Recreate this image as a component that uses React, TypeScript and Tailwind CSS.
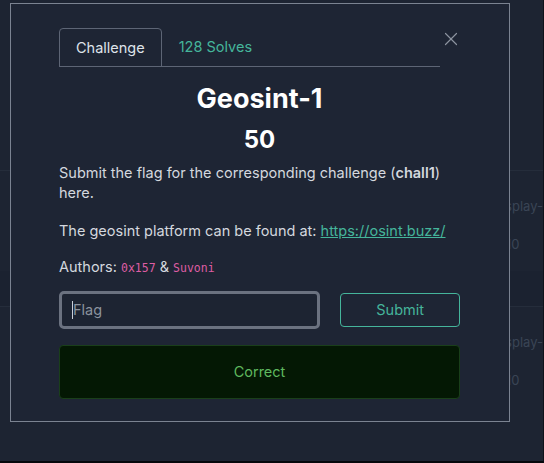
import { X } from "lucide-react";

const font = { fontFamily: "Inter, 'Noto Sans', sans-serif" };
const mono = { fontFamily: "'DejaVu Sans Mono', monospace" };

function BackgroundRows() {
  // faint table rows of the page behind the modal
  return (
    <div className="flex h-full flex-col pt-[170px] text-[13px] text-[#3a4455]">
      <div className="border-t border-[#252d3b]">
        <div className="flex h-[100px] flex-col gap-[18px] pl-[494px] pt-[26px]">
          <span>display-</span>
          <span className="pl-[12px]">10</span>
        </div>
      </div>
      <div className="h-[35px] bg-[#1b2230]" />
      <div className="border-t border-[#252d3b]">
        <div className="flex h-[100px] flex-col gap-[18px] pl-[494px] pt-[26px]">
          <span>display-</span>
          <span className="pl-[12px]">10</span>
        </div>
      </div>
    </div>
  );
}

export default function App() {
  return (
    <div
      className="relative h-[463px] w-[544px] overflow-hidden border-b-2 border-r border-b-[#05070b] border-r-[#0e121a] bg-[#1d2432]"
      style={font}
    >
      <BackgroundRows />

      <div className="absolute left-[10px] top-[3px] h-[419px] w-[500px] border border-[#7b8391] bg-[#1e2534] pl-[48px] pr-[49px] pt-[24px]">
        <div className="flex items-start">
          <div className="flex w-[381px] shrink-0 border-b border-[#5d6575]">
            <div className="mb-[-1px] flex h-[39px] items-center rounded-t-[4px] border border-[#5d6575] px-4 text-[14.5px] text-[#dfe3ea]">
              Challenge
            </div>
            <div className="flex h-[38px] items-center pl-[17px] text-[14.5px] text-[#45b59b]">
              128 Solves
            </div>
          </div>
          <button className="ml-auto text-[#8c939f]">
            <X size={22} strokeWidth={1.3} />
          </button>
        </div>

        <h1 className="mt-[15px] text-center text-[27px] font-bold leading-[34px] text-white">
          Geosint-1
        </h1>
        <div className="mt-[8px] text-center text-[24px] font-bold leading-[32px] text-white">
          50
        </div>

        <p className="mt-[7px] text-[14.5px] leading-[20px] text-[#d4d8df]">
          <span>Submit the flag for the corresponding challenge (</span>
          <span className="font-semibold">chall1</span>
          <span>) </span>
          <span>here.</span>
        </p>
        <p className="mt-[18px] text-[14.5px] leading-[20px] text-[#d4d8df]">
          The geosint platform can be found at:{" "}
          <a className="text-[#45b59b] underline" href="#">
            https://osint.buzz/
          </a>
        </p>
        <p className="mt-[16px] text-[14.5px] leading-[20px] text-[#d4d8df]">
          Authors:{" "}
          <code className="text-[11.5px] text-[#de5da3]" style={mono}>
            0x157
          </code>{" "}
          &amp;{" "}
          <code className="text-[11.5px] text-[#de5da3]" style={mono}>
            Suvoni
          </code>
        </p>

        <div className="mt-[13px] flex items-center gap-[20px]">
          <div className="flex h-[38px] w-[262px] items-center rounded-[5px] border-[3px] border-[#6b7280] bg-[#1d2432] pl-[10px]">
            <span className="h-[18px] w-px bg-[#c9ced6]" />
            <span className="text-[14.5px] text-[#8b929d]">Flag</span>
          </div>
          <button className="flex h-[34px] w-[120px] items-center justify-center rounded-[4px] border border-[#45b59b] text-[14.5px] text-[#45b59b]">
            Submit
          </button>
        </div>

        <div className="mt-[16px] flex h-[54px] items-center justify-center rounded-[4px] border border-[#1a3f1a] bg-[#041804] text-[14.5px] text-[#5fb85f]">
          Correct
        </div>
      </div>
    </div>
  );
}
